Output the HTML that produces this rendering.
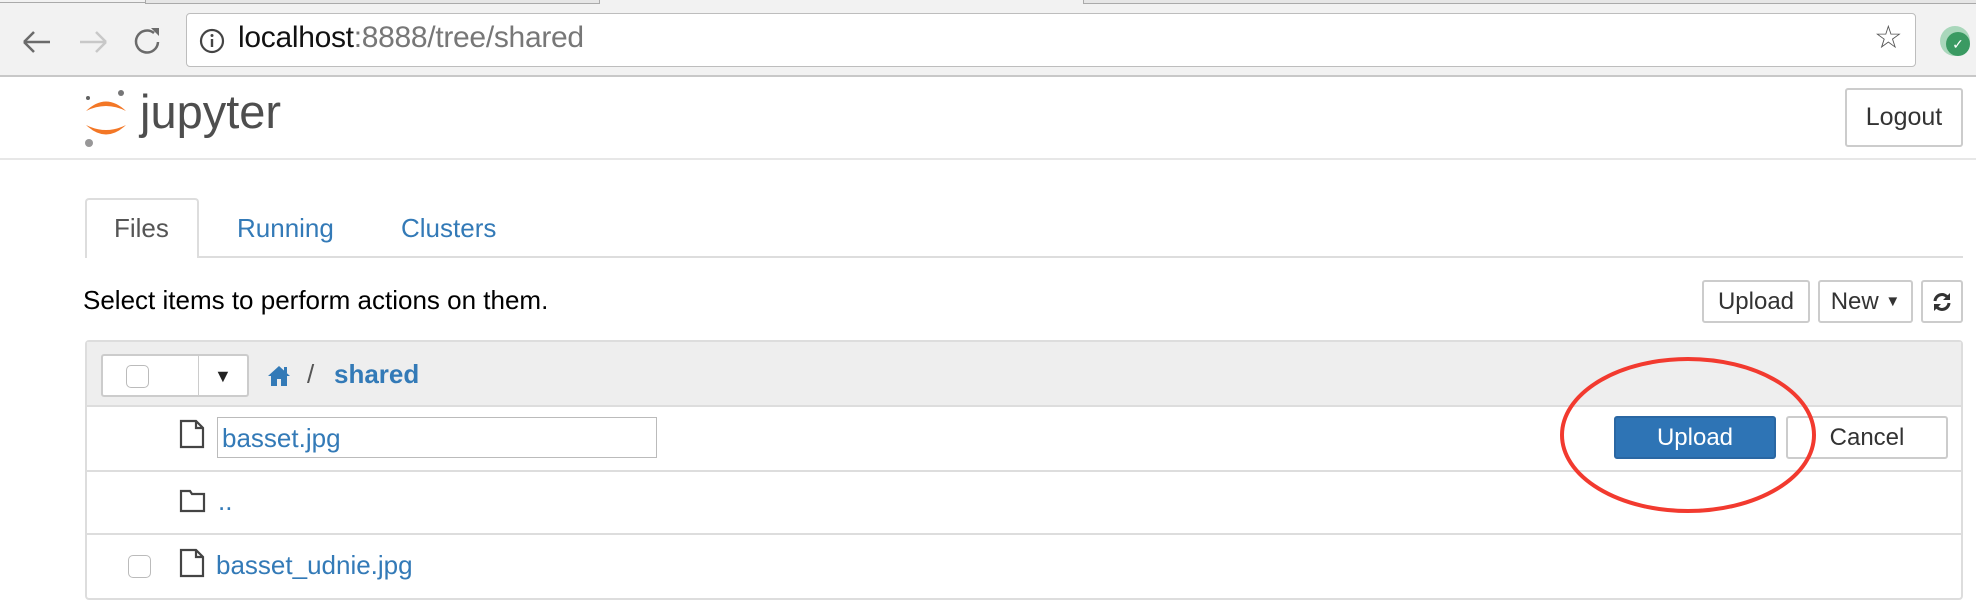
<!DOCTYPE html>
<html><head><meta charset="utf-8"><style>
*{box-sizing:border-box}
body{margin:0;width:1976px;height:610px;position:relative;overflow:hidden;background:#fff;font-family:"Liberation Sans",Arial,sans-serif;color:#000}
.a{position:absolute}
a{color:#337ab7;text-decoration:none}
.btn{position:absolute;border:2px solid #ccc;border-radius:3px;background:#fff;color:#333;font-size:24px;display:flex;align-items:center;justify-content:center}
</style></head><body>
<div class="a" style="left:0;top:0;width:1976px;height:77px;background:#f2f2f2;border-bottom:2px solid #c8c8c8"></div>
<div class="a" style="left:0;top:0;width:145px;height:3px;border-bottom:1px solid #aaa"></div>
<div class="a" style="left:145px;top:0;width:455px;height:4px;background:#e6e6e6;border:1px solid #aaa;border-top:0"></div>
<div class="a" style="left:1083px;top:0;width:893px;height:4px;background:#e6e6e6;border-left:1px solid #aaa;border-bottom:1px solid #aaa"></div>
<svg class="a" style="left:18px;top:22px" width="150" height="40" viewBox="0 0 150 40">
<path d="M6 20h26M6 20l10-10M6 20l10 10" stroke="#6b6b6b" stroke-width="2.5" fill="none"/>
<path d="M62 20h26M88 20l-10-10M88 20l-10 10" stroke="#c8c8c8" stroke-width="2.5" fill="none"/>
<path d="M136 11a11 11 0 1 0 4 9" stroke="#6b6b6b" stroke-width="2.5" fill="none"/><path d="M133 6l8 0 0 8z" fill="#6b6b6b"/>
</svg>
<div class="a" style="left:186px;top:13px;width:1730px;height:54px;background:#fff;border:1px solid #bdbdbd;border-radius:4px"></div>
<svg class="a" style="left:199px;top:28px" width="26" height="26"><circle cx="13" cy="13" r="11" stroke="#444" stroke-width="2.2" fill="none"/><rect x="11.8" y="11" width="2.4" height="8" fill="#444"/><circle cx="13" cy="7.5" r="1.5" fill="#444"/></svg>
<div class="a" style="left:238px;top:20px;font-size:30px;line-height:36px;color:#111;letter-spacing:-0.3px">localhost<span style="color:#777">:8888/tree/shared</span></div>
<div class="a" style="left:1874px;top:18px;font-size:32px;color:#555">☆</div>
<div class="a" style="left:1940px;top:26px;width:30px;height:30px;border-radius:50%;background:#a9d7bb"></div>
<div class="a" style="left:1946px;top:32px;width:24px;height:24px;border-radius:50%;background:#3a9a62;color:#fff;font-size:14px;text-align:center;line-height:24px">✓</div>

<svg class="a" style="left:82px;top:88px" width="48" height="60" viewBox="0 0 48 60">
<path d="M4 23 Q24 4 44 23 Q24 13 4 23Z" fill="#f37726"/>
<path d="M4 37 Q24 56 44 37 Q24 47 4 37Z" fill="#f37726"/>
<circle cx="39" cy="5" r="3" fill="#767677"/><circle cx="7" cy="55" r="4" fill="#989798"/><circle cx="6" cy="10" r="2" fill="#616262"/>
</svg>
<div class="a" style="left:140px;top:84px;font-size:47px;color:#4e4e4e">jupyter</div>
<div class="btn" style="left:1845px;top:88px;width:118px;height:59px;font-size:25px">Logout</div>
<div class="a" style="left:0;top:158px;width:1976px;height:2px;background:#e7e7e7"></div>

<div class="a" style="left:85px;top:256px;width:1878px;height:2px;background:#ddd"></div>
<div class="a" style="left:85px;top:198px;width:114px;height:60px;background:#fff;border:2px solid #ddd;border-bottom:0;border-radius:4px 4px 0 0"></div>
<div class="a" style="left:114px;top:213px;font-size:26px;color:#555">Files</div>
<a class="a" style="left:237px;top:213px;font-size:26px">Running</a>
<a class="a" style="left:401px;top:213px;font-size:26px">Clusters</a>

<div class="a" style="left:83px;top:285px;font-size:26px">Select items to perform actions on them.</div>
<div class="btn" style="left:1702px;top:280px;width:108px;height:43px">Upload</div>
<div class="btn" style="left:1818px;top:280px;width:95px;height:43px">New&nbsp;<span style="font-size:15px">▼</span></div>
<div class="btn" style="left:1921px;top:280px;width:42px;height:43px"><svg width="22" height="22" viewBox="0 0 22 22"><path d="M4 10a7 7 0 0 1 13-3M18 12a7 7 0 0 1-13 3" stroke="#333" stroke-width="3" fill="none"/><path d="M19 2v7h-7z M3 20v-7h7z" fill="#333"/></svg></div>

<div class="a" style="left:85px;top:340px;width:1878px;height:260px;border:2px solid #ddd;border-radius:4px"></div>
<div class="a" style="left:87px;top:342px;width:1874px;height:65px;background:#eee;border-bottom:2px solid #ddd"></div>
<div class="a" style="left:101px;top:354px;width:148px;height:43px;background:#fff;border:2px solid #ccc;border-radius:3px"></div>
<div class="a" style="left:198px;top:355px;width:1px;height:41px;background:#ccc"></div>
<div class="a" style="left:126px;top:365px;width:23px;height:23px;border:1px solid #bbb;border-radius:5px;background:#fff"></div>
<div class="a" style="left:214px;top:366px;font-size:18px;color:#222">▼</div>
<svg class="a" style="left:267px;top:364px" width="24" height="24" viewBox="0 0 24 24"><path d="M12 2L1 12h3v10h6v-7h4v7h6V12h3z" fill="#337ab7"/><rect x="17" y="3" width="3" height="6" fill="#337ab7"/></svg>
<div class="a" style="left:307px;top:359px;font-size:26px;color:#555">/</div>
<a class="a" style="left:334px;top:359px;font-size:26px;font-weight:bold">shared</a>

<div class="a" style="left:87px;top:470px;width:1874px;height:2px;background:#ddd"></div>
<div class="a" style="left:87px;top:533px;width:1874px;height:2px;background:#ddd"></div>

<svg class="a" style="left:179px;top:419px" width="26" height="30" viewBox="0 0 26 30"><path d="M2 2h15l7 7v19H2z M17 2v7h7" stroke="#444" stroke-width="2.2" fill="#fff"/></svg>
<div class="a" style="left:217px;top:417px;width:440px;height:41px;border:1px solid #bbb"></div>
<div class="a" style="left:222px;top:423px;font-size:26px;color:#337ab7">basset.jpg</div>
<div class="a" style="left:1614px;top:416px;width:162px;height:43px;background:#2e74b5;border:2px solid #2a67a3;border-radius:3px;color:#fff;font-size:24px;display:flex;align-items:center;justify-content:center">Upload</div>
<div class="btn" style="left:1786px;top:416px;width:162px;height:43px;font-size:24px">Cancel</div>
<svg class="a" style="left:1556px;top:354px" width="264" height="162"><ellipse cx="132" cy="81" rx="126" ry="76" stroke="#f23a2f" stroke-width="4" fill="none"/></svg>

<svg class="a" style="left:179px;top:488px" width="28" height="26" viewBox="0 0 28 26"><path d="M2 3h9l2 3h12v17H2z" stroke="#444" stroke-width="2.2" fill="#fff"/></svg>
<a class="a" style="left:218px;top:486px;font-size:26px">..</a>

<div class="a" style="left:128px;top:555px;width:23px;height:23px;border:1px solid #bbb;border-radius:5px;background:#fff"></div>
<svg class="a" style="left:179px;top:548px" width="26" height="30" viewBox="0 0 26 30"><path d="M2 2h15l7 7v19H2z M17 2v7h7" stroke="#444" stroke-width="2.2" fill="#fff"/></svg>
<a class="a" style="left:216px;top:550px;font-size:26px">basset_udnie.jpg</a>
</body></html>
